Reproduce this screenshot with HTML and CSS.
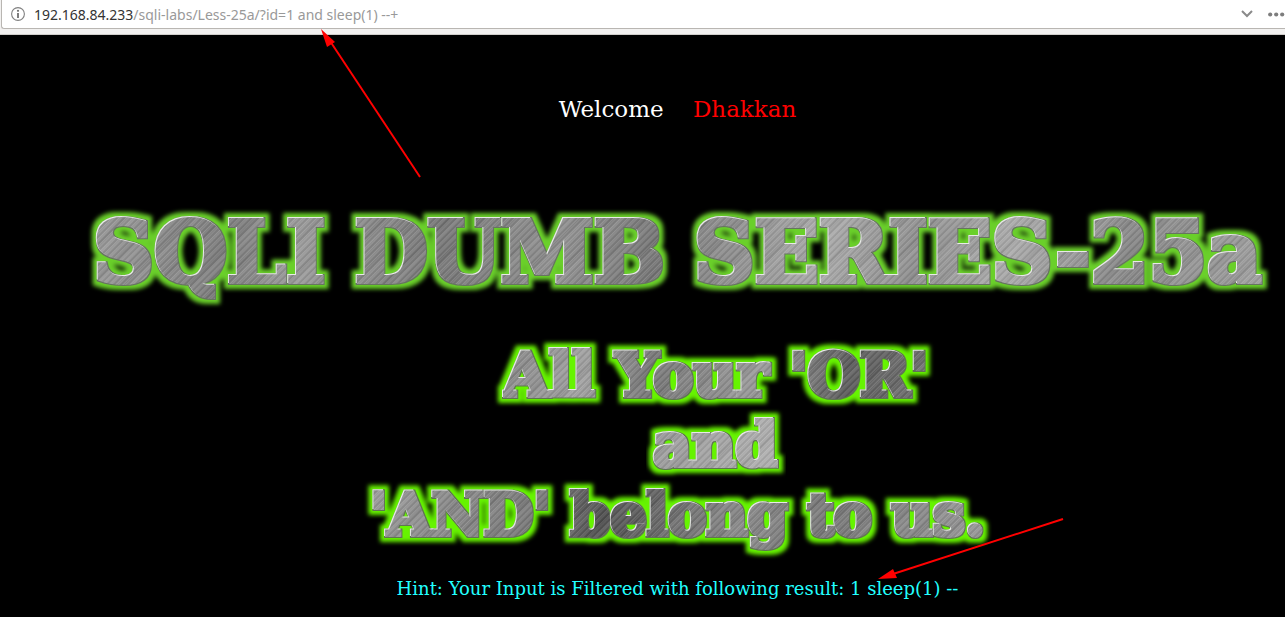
FILE: index.html
```html
<!DOCTYPE html>
<html lang="en">
<head>
<meta charset="utf-8">
<title>Less-25a Trick with OR &amp; AND Blind</title>
<link rel="stylesheet" href="styles.css">
</head>
<body>
<svg class="defs" width="0" height="0" aria-hidden="true">
  <filter id="glow-soft" x="-5%" y="-20%" width="110%" height="140%" color-interpolation-filters="sRGB">
    <feMorphology in="SourceAlpha" operator="dilate" radius="1" result="body"/>
    <feMorphology in="SourceAlpha" operator="dilate" radius="5" result="fat"/>
    <feGaussianBlur in="fat" stdDeviation="2" result="halo"/>
    <feFlood flood-color="#6ad02a"/>
    <feComposite in2="halo" operator="in" result="green"/>
    <feFlood flood-color="#66755f"/>
    <feComposite in2="body" operator="in" result="shade"/>
    <feOffset in="SourceAlpha" dx="-1" dy="-1" result="high"/>
    <feFlood flood-color="#ffffff" flood-opacity="0.85"/>
    <feComposite in2="high" operator="in" result="shine"/>
    <feMerge>
      <feMergeNode in="green"/><feMergeNode in="shade"/><feMergeNode in="shine"/><feMergeNode in="SourceGraphic"/>
    </feMerge>
  </filter>
  <filter id="glow-bright" x="-5%" y="-20%" width="110%" height="140%" color-interpolation-filters="sRGB">
    <feMorphology in="SourceAlpha" operator="dilate" radius="1" result="body"/>
    <feMorphology in="SourceAlpha" operator="dilate" radius="5" result="fat"/>
    <feGaussianBlur in="fat" stdDeviation="2" result="halo"/>
    <feFlood flood-color="#66f400"/>
    <feComposite in2="halo" operator="in" result="green"/>
    <feFlood flood-color="#5f7550"/>
    <feComposite in2="body" operator="in" result="shade"/>
    <feOffset in="SourceAlpha" dx="-1" dy="-1" result="high"/>
    <feFlood flood-color="#ffffff" flood-opacity="0.85"/>
    <feComposite in2="high" operator="in" result="shine"/>
    <feMerge>
      <feMergeNode in="green"/><feMergeNode in="shade"/><feMergeNode in="shine"/><feMergeNode in="SourceGraphic"/>
    </feMerge>
  </filter>
</svg>

<header class="toolbar">
  <form class="address">
    <svg class="info" viewBox="0 0 14 14" aria-hidden="true">
      <circle cx="7" cy="7" r="6.4" fill="none" stroke="#808080" stroke-width="1.1"/>
      <path d="M7 6v5" stroke="#6f6f6f" stroke-width="1.8"/>
      <circle cx="7" cy="3.8" r="1.1" fill="#6f6f6f"/>
    </svg>
    <label class="host" for="url">192.168.84.233</label>
    <input class="path" id="url" type="text" value="/sqli-labs/Less-25a/?id=1 and sleep(1) --+" spellcheck="false">
    <button class="tool" type="button" aria-label="Show history">
      <svg class="chevron" viewBox="0 0 12 8"><path d="M1 1l5 5 5-5" fill="none" stroke="#8a8a8a" stroke-width="2"/></svg>
    </button>
    <button class="tool" type="button" aria-label="Page actions">
      <svg class="dots" viewBox="0 0 17 5" fill="#7d7d7d"><circle cx="2.2" cy="2.5" r="2.1"/><circle cx="8.2" cy="2.5" r="2.1"/><circle cx="14.2" cy="2.5" r="2.1"/></svg>
    </button>
  </form>
</header>

<main class="page">
  <p class="welcome">Welcome <span class="name">Dhakkan</span></p>
  <h1 class="metal title">SQLI DUMB SERIES-25a</h1>
  <h2 class="slogan">
    <span class="metal line shifted first">All Your 'OR'</span>
    <span class="metal line shifted second">and</span>
    <span class="metal line third">'AND' belong to us.</span>
  </h2>
  <p class="hint">Hint: Your Input is Filtered with following result: 1 sleep(1) --</p>
</main>

<svg class="arrow arrow-url" viewBox="0 0 102 150" aria-hidden="true">
  <path d="M9 12L99 148" stroke="#f00" stroke-width="2"/>
  <path d="M0 0L14 13L6 18Z" fill="#f00"/>
</svg>
<svg class="arrow arrow-hint" viewBox="0 0 188 64" aria-hidden="true">
  <path d="M15 57L185 2" stroke="#f00" stroke-width="2"/>
  <path d="M0 62L15 52L19 61Z" fill="#f00"/>
</svg>
</body>
</html>
```
FILE: styles.css
```css
* { box-sizing: border-box; }

body {
  margin: 0;
  min-height: 100vh;
  position: relative;
  overflow: hidden;
  background: #000;
  font-family: "DejaVu Serif", serif;
}

.defs { position: absolute; }

.toolbar {
  height: 35px;
  padding-left: 1px;
  background: #f2f1f0;
  border-bottom: 1px solid #d0cecb;
}

.address {
  display: flex;
  align-items: center;
  height: 29px;
  padding-left: 9px;
  background: #fff;
  border: 1px solid #b9b6b2;
  border-width: 0 0 1px 1px;
  border-radius: 0 0 0 3px;
  font: 14px "Noto Sans", sans-serif;
}

.info { width: 14px; height: 14px; margin-right: 9px; }
.host { color: #333; }

.path {
  flex: 1;
  min-width: 0;
  padding: 0;
  border: 0;
  outline: 0;
  background: none;
  color: #999;
  font: inherit;
}

.tool {
  display: flex;
  margin-left: 15px;
  padding: 0;
  border: 0;
  background: none;
}

.chevron { width: 12px; height: 8px; }
.dots { width: 17px; height: 5px; }

.page {
  padding: 60px 0 0 70px;
  text-align: center;
}

.welcome {
  margin: 0;
  color: #fff;
  font-size: 23px;
  line-height: 28px;
}

.name { margin-left: 22px; color: #f00; }

.metal {
  --brushed:
    repeating-linear-gradient(135deg, #fff1 0 1px, #0001 2px 3px, #fff2 4px, #0000 5px),
    repeating-linear-gradient(135deg, #0000 0 7px, #0001 10px, #fff1 16px, #0000 23px);
  white-space: nowrap;
  color: transparent;
  -webkit-background-clip: text;
  background-clip: text;
  -webkit-text-stroke: 4px transparent;
}

.title {
  width: max-content;
  margin: 80px auto 0;
  font-size: 84px;
  line-height: 100px;
  background-image: var(--brushed),
    linear-gradient(100deg, #999, #7c7c7c 12%, #999 18%, #777 30%, #909090 40%, #777 48%, #aaa 62%, #909090 70%, #aaa 78%, #888 88%, #a0a0a0);
  filter: url(#glow-soft);
}

.slogan {
  display: flex;
  flex-direction: column;
  align-items: center;
  margin: 37px 0 0;
  font-size: 60px;
  line-height: 70px;
}

.line { filter: url(#glow-bright); }
.shifted { margin-left: 76px; }

.first {
  background-image: var(--brushed),
    linear-gradient(100deg, #888, #a0a0a0 20%, #777 35%, #999 60%, #5c5c5c 80%, #707070);
}

.second {
  background-image: var(--brushed), linear-gradient(100deg, #999, #b0b0b0);
}

.third {
  font-size: 57px;
  background-image: var(--brushed),
    linear-gradient(100deg, #999, #777 28%, #505050 38%, #888 60%, #777 75%, #999);
}

.hint {
  margin: 27px 0 0;
  color: #2ff;
  font-size: 18px;
  line-height: 24px;
}

.arrow { position: absolute; pointer-events: none; }
.arrow-url { left: 321px; top: 29px; width: 102px; height: 150px; }
.arrow-hint { left: 878px; top: 517px; width: 188px; height: 64px; }
```
